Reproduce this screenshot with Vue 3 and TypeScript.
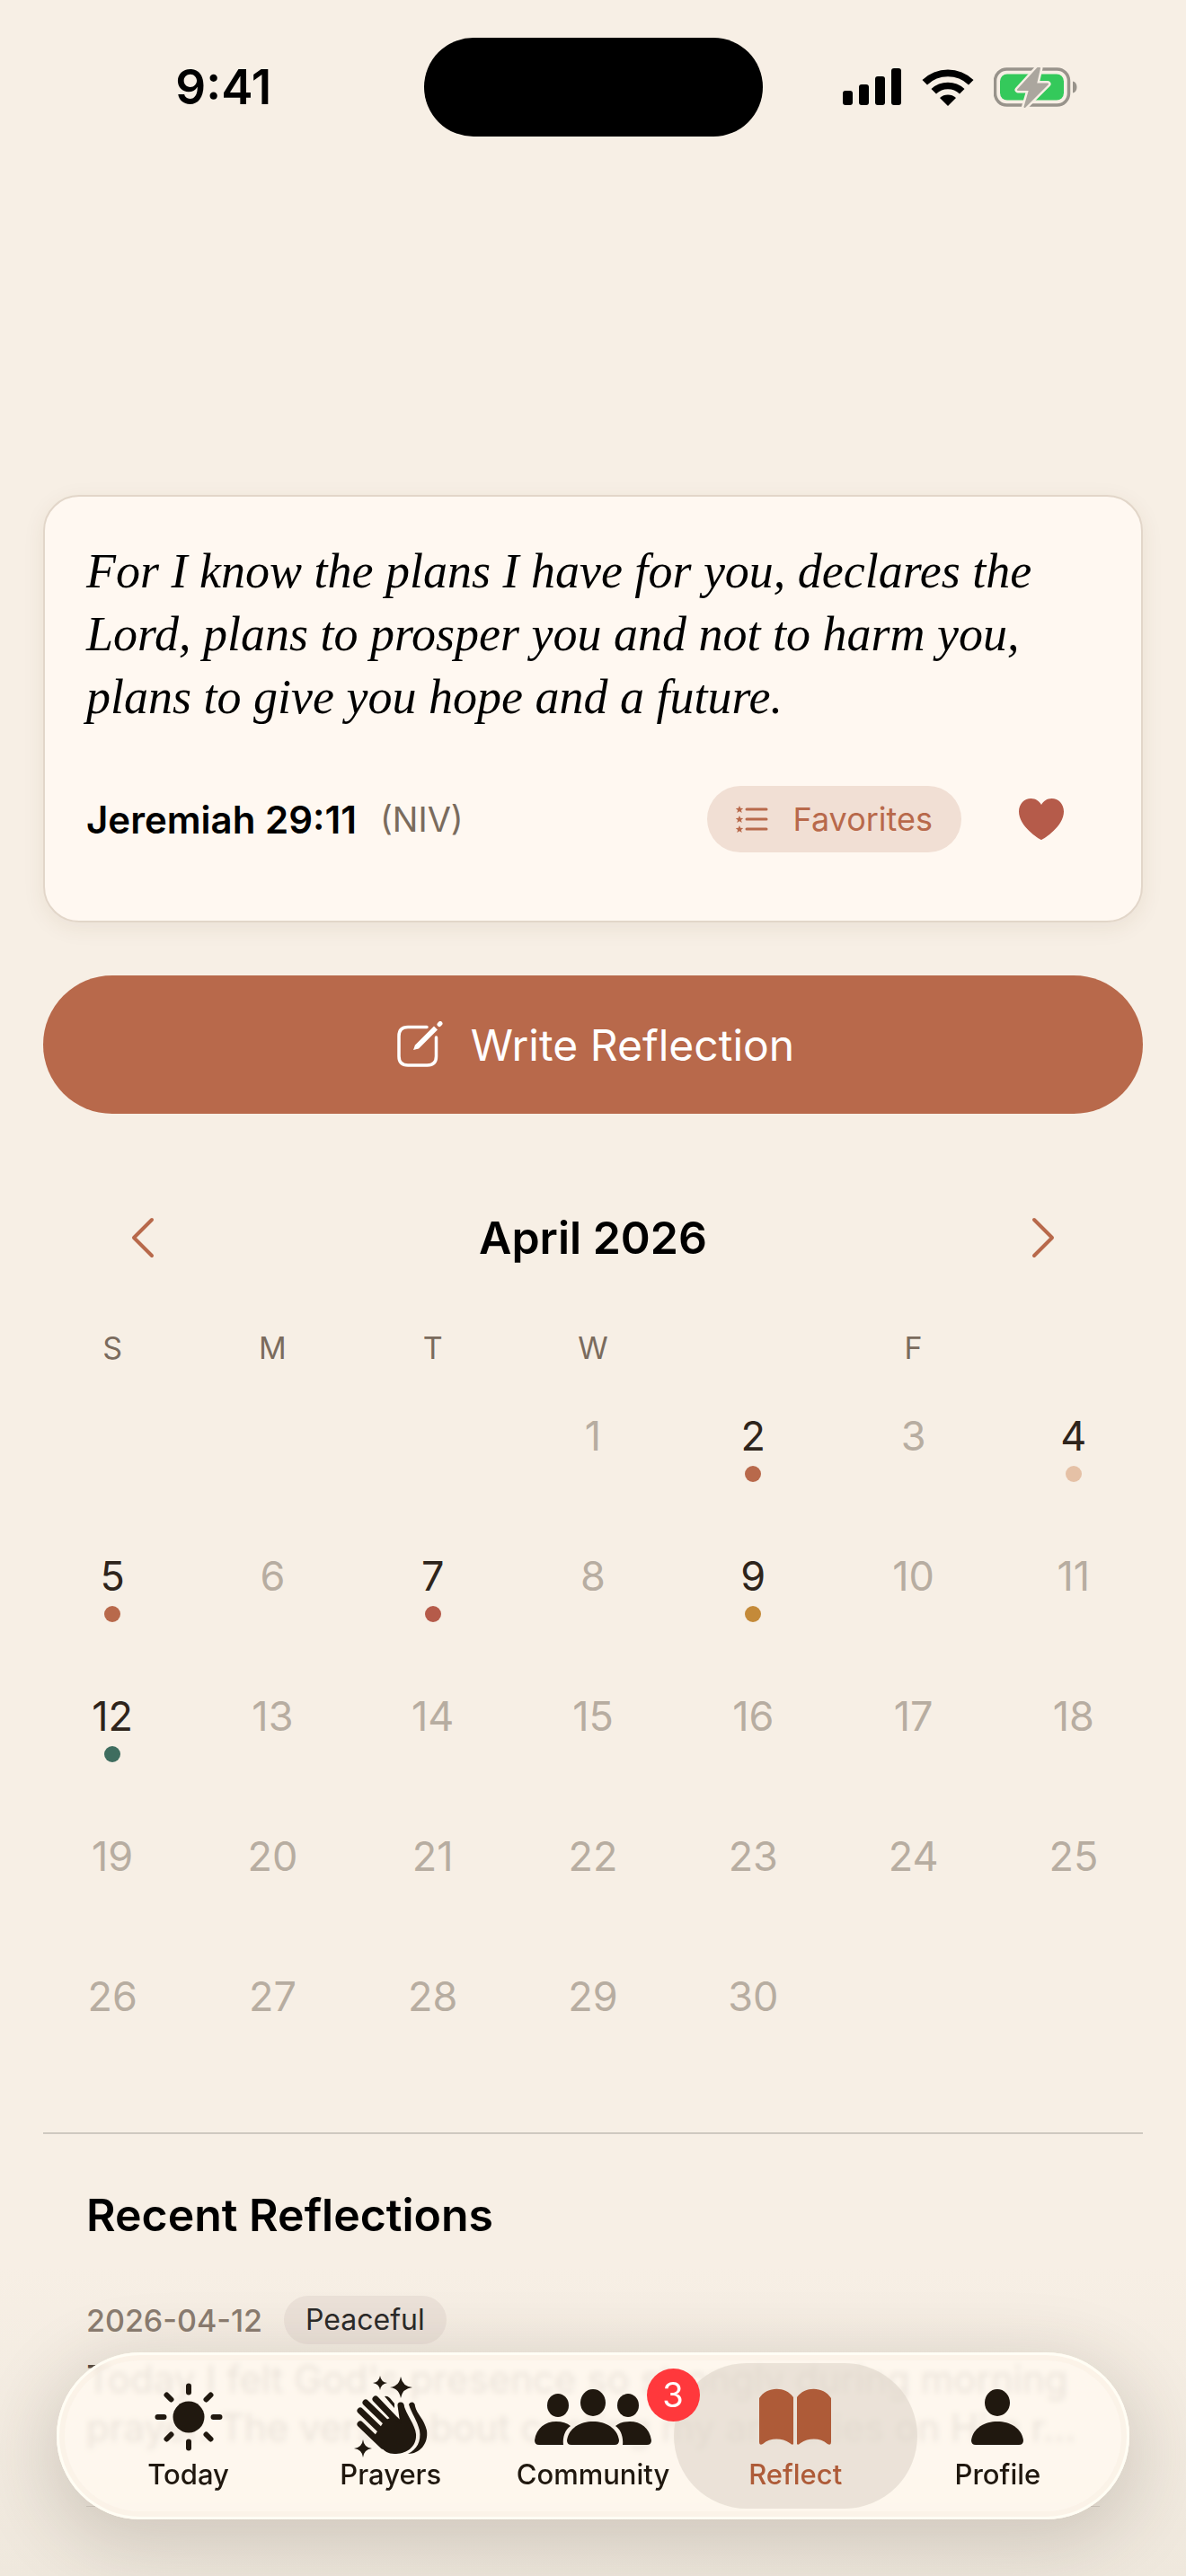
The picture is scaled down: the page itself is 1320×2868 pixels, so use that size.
<script setup lang="ts">
interface Day {
  n: number
  mood?: string
}

const weekdays: string[] = ['S', 'M', 'T', 'W', '', 'F', '']

const moods: Record<number, string> = {
  2: '#b8694b',
  4: '#e5c1a6',
  5: '#b8694b',
  7: '#b55b4a',
  9: '#c48a39',
  12: '#3f6d5f',
}

const firstWeekday = 3
const cells: (Day | null)[] = [
  ...Array.from({ length: firstWeekday }, () => null),
  ...Array.from({ length: 30 }, (_, i) => ({ n: i + 1, mood: moods[i + 1] })),
]
while (cells.length % 7) cells.push(null)

const weeks: (Day | null)[][] = []
for (let i = 0; i < cells.length; i += 7) weeks.push(cells.slice(i, i + 7))
</script>

<template>
  <div class="screen">
    <header class="status">
      <span class="time">9:41</span>
      <span class="island"></span>
      <span class="indicators">
        <svg width="66" height="42" viewBox="0 0 66 42" aria-hidden="true">
          <rect x="0" y="25" width="11" height="16" rx="3" />
          <rect x="18" y="18" width="11" height="23" rx="3" />
          <rect x="36" y="9" width="11" height="32" rx="3" />
          <rect x="54" y="0" width="11" height="41" rx="3" />
        </svg>
        <svg width="58" height="42" viewBox="0 0 58 42" aria-hidden="true">
          <path d="M0.5 13 A41 41 0 0 1 57.500 13 L52 18.500 A33 33 0 0 0 6 18.500 Z" />
          <path d="M10.500 23 A27 27 0 0 1 47.500 23 L42 28.500 A19 19 0 0 0 16 28.500 Z" />
          <path d="M20 33 A13.500 13.500 0 0 1 38 33 L29 42 Z" />
        </svg>
        <svg width="94" height="46" viewBox="0 0 94 46" aria-hidden="true">
          <rect x="1.500" y="3" width="82" height="40" rx="13" fill="none" stroke="#98938b" stroke-width="3.500" />
          <path d="M88 16.500 C94 17.500 94 28.500 88 29.500 Z" fill="#98938b" />
          <rect x="7" y="8.500" width="71" height="29" rx="8" fill="#34c95b" />
          <path
            d="M49 2 L27 26 H40 L34.500 45 L60 19.500 H47 L51 2 Z"
            fill="#aba69e" stroke="#f7efe5" stroke-width="7" stroke-linejoin="round"
          />
          <path
            d="M49 2 L27 26 H40 L34.500 45 L60 19.500 H47 L51 2 Z"
            fill="#aba69e" stroke="#aba69e" stroke-width="2" stroke-linejoin="round"
          />
        </svg>
      </span>
    </header>

    <main class="content">
      <article class="verse">
        <blockquote>For I know the plans I have for you, declares the Lord, plans to prosper you and not to harm you, plans to give you hope and a future.</blockquote>
        <footer class="verse-foot">
          <cite>Jeremiah 29:11</cite>
          <span class="version">(NIV)</span>
          <button class="favorites" type="button">
            <svg width="36" height="30" viewBox="0 0 36 30" aria-hidden="true">
              <g stroke="currentColor" stroke-width="3" stroke-linecap="round">
                <path d="M12 4H34M12 15H34M12 26H34" />
              </g>
              <g fill="currentColor">
                <path id="star" d="M4 0l1.200 2.800 3 .2-2.300 2 .8 3L4 6.300 1.300 8l.8-3L-.2 3l3-.2z" />
                <use href="#star" y="11" />
                <use href="#star" y="22" />
              </g>
            </svg>
            Favorites
          </button>
          <button class="heart" type="button" aria-label="Remove from favorites">
            <svg width="50" height="46" viewBox="0 0 50 46" aria-hidden="true">
              <path d="M25 46 C22 45 0 31 0 14.500 C0 6 6 0 13.500 0 C18.500 0 22.800 2.800 25 7 C27.200 2.800 31.500 0 36.500 0 C44 0 50 6 50 14.500 C50 31 28 45 25 46 Z" fill="#b55b4a" />
            </svg>
          </button>
        </footer>
      </article>

      <button class="write" type="button">
        <svg width="52" height="52" viewBox="0 0 52 52" fill="none" stroke="#fff" aria-hidden="true">
          <path d="M33 6.500 H12 Q2 6.500 2 16.500 V39 Q2 49 12 49 H33.500 Q43.500 49 43.500 39 V18" stroke-width="3.500" stroke-linecap="round" />
          <path d="M18 32 L20 26.500 L41 5.500 L45 9.500 L24 30.500 Z" fill="#fff" stroke="none" />
          <path d="M47 3.500 L48 2.500" stroke-width="5" stroke-linecap="round" />
        </svg>
        Write Reflection
      </button>

      <section class="calendar">
        <div class="month">
          <button type="button" aria-label="Previous month">
            <svg width="26" height="46" viewBox="0 0 26 46" aria-hidden="true"><path d="M23 3 L3 23 L23 43" /></svg>
          </button>
          <h2>April 2026</h2>
          <button type="button" aria-label="Next month">
            <svg width="26" height="46" viewBox="0 0 26 46" aria-hidden="true"><path d="M3 3 L23 23 L3 43" /></svg>
          </button>
        </div>
        <table>
          <thead>
            <tr>
              <th v-for="(d, i) in weekdays" :key="i" scope="col">{{ d }}</th>
            </tr>
          </thead>
          <tbody>
            <tr v-for="(week, w) in weeks" :key="w">
              <td v-for="(day, i) in week" :key="i">
                <div v-if="day" class="day" :class="{ marked: day.mood }">
                  {{ day.n }}
                  <span v-if="day.mood" class="dot" :style="{ background: day.mood }"></span>
                </div>
              </td>
            </tr>
          </tbody>
        </table>
      </section>

      <section class="recent">
        <h2>Recent Reflections</h2>
        <article class="entry">
          <div class="meta">
            <time datetime="2026-04-12">2026-04-12</time>
            <span class="tag">Peaceful</span>
          </div>
          <p>Today I felt God's presence so strongly during morning<br />prayer. The verse about casting my anxieties on Him r...</p>
        </article>
      </section>
    </main>

    <nav class="tabs" aria-label="Main">
      <a href="#today">
        <svg width="76" height="76" viewBox="-38 -38 76 76" aria-hidden="true">
          <circle r="17.500" />
          <g stroke="currentColor" stroke-width="6" stroke-linecap="round">
            <path d="M0-34.500V-27.500M0 34.500V27.500M-34.500 0H-27.500M34.500 0H27.500M-24.500-24.500L-19.500-19.500M24.500 24.500L19.500 19.500M-24.500 24.500L-19.500 19.500M24.500-24.500L19.500-19.500" />
          </g>
        </svg>
        Today
      </a>
      <a href="#prayers">
        <svg width="82" height="92" viewBox="0 0 82 92" aria-hidden="true">
          <path d="M29 0 Q30 7 37 8 Q30 9 29 16 Q28 9 21 8 Q28 7 29 0Z" />
          <path d="M52 1 Q54 12 65 13 Q54 14 52 25 Q50 14 40 13 Q50 12 52 1Z" />
          <path d="M10 71 Q11 80 20 81 Q11 82 10 91 Q9 82 0 81 Q9 80 10 71Z" />
          <g fill="none" stroke="currentColor" stroke-width="7" stroke-linecap="round">
            <path d="M7 54 L32 78M7 39 L36 67M13 30 L42 58M24 26 L50 53M52 33 L55 54" />
          </g>
          <path d="M34 50 L42 46 L53 54 L49 33 L55 31 C58 44 68 54 69 65 C70 79 59 87 45 87 C38 87 34 84 29 79 L22 68 Z" />
          <path d="M34 23 Q37 22 40 25 L45 31 V36 Z" />
          <path d="M61 32 C63 28 68 29 68 34 C70 43 78 48 81 61 C83 76 73 87 60 87 C70 82 75 73 73 61 C70 49 64 42 61 32Z" />
        </svg>
        Prayers
      </a>
      <a href="#community">
        <svg width="130" height="64" viewBox="0 0 130 64" aria-hidden="true">
          <ellipse cx="26" cy="19" rx="12" ry="13" />
          <ellipse cx="104" cy="19" rx="12" ry="13" />
          <ellipse cx="65" cy="16" rx="14" ry="15" />
          <path d="M5 63 Q0 63 0 58 C2 44 12 37 24 37 Q34 37 40 42 C34 46 31 54 32 63 Z" />
          <path d="M125 63 Q130 63 130 58 C128 44 118 37 106 37 Q96 37 90 42 C96 46 99 54 98 63 Z" />
          <path d="M41 63 Q36 63 36 58 C38 44 51 37 65 37 C79 37 92 44 94 58 Q94 63 89 63 Z" />
        </svg>
        Community
        <span class="badge">3</span>
      </a>
      <a href="#reflect" class="active" aria-current="page">
        <svg width="80" height="64" viewBox="0 0 80 64" aria-hidden="true">
          <path d="M0 11 C8-2 29-3 38 10 V62 Q37 64 34 61 C25 55 12 55 4 62 Q0 64 0 60 Z" />
          <path d="M42 10 C51-3 72-2 80 11 V60 Q80 64 76 62 C68 55 55 55 46 61 Q43 64 42 62 Z" />
        </svg>
        Reflect
      </a>
      <a href="#profile">
        <svg width="58" height="64" viewBox="0 0 58 64" aria-hidden="true">
          <ellipse cx="29" cy="16" rx="14" ry="15" />
          <path d="M5 63 Q0 63 0 58 C2 44 15 37 29 37 C43 37 56 44 58 58 Q58 63 53 63 Z" />
        </svg>
        Profile
      </a>
    </nav>
  </div>
</template>

<style>
body {
  margin: 0;
  background: #f7efe5;
}
</style>

<style scoped>
.screen {
  position: relative;
  height: 100vh;
  overflow: hidden;
  background: linear-gradient(#f7efe5 0, #f7efe5 88%, #efe8dd 100%);
  font-family: Inter, 'Liberation Sans', sans-serif;
  color: #000;
}

button {
  border: 0;
  padding: 0;
  background: none;
  font: inherit;
}

h2 {
  margin: 0;
  font-size: 50px;
  font-weight: 600;
  line-height: 60px;
}

.status {
  display: grid;
  grid-template-columns: 1fr 377px 1fr;
  align-items: center;
  height: 110px;
  padding-top: 42px;
}

.time {
  padding-left: 26px;
  text-align: center;
  font-size: 53px;
  font-weight: 600;
}

.island {
  height: 110px;
  border-radius: 55px;
  background: #000;
}

.indicators {
  display: flex;
  align-items: center;
  gap: 22px;
  padding-left: 89px;
}

.content {
  padding: 399px 48px 0;
}

.verse {
  box-sizing: border-box;
  height: 476px;
  padding: 48px 46px;
  border: 2px solid #e2d6c9;
  border-radius: 40px;
  background: #fff8f1;
  box-shadow: 0 6px 24px rgba(90, 60, 30, 0.08);
}

blockquote {
  margin: 0;
  font-family: 'Liberation Serif', serif;
  font-size: 54px;
  font-style: italic;
  line-height: 70px;
}

.verse-foot {
  display: flex;
  align-items: center;
  height: 74px;
  margin-top: 64px;
}

cite {
  font-size: 42px;
  font-style: normal;
  font-weight: 600;
}

.version {
  margin-left: 26px;
  color: #7a6b5d;
  font-size: 38px;
}

.favorites {
  display: flex;
  align-items: center;
  gap: 28px;
  height: 74px;
  margin-left: auto;
  padding: 0 32px;
  border-radius: 37px;
  background: #f1dfd4;
  color: #b8694b;
  font-size: 36px;
}

.heart {
  display: flex;
  margin: 0 40px 0 64px;
}

.write {
  display: flex;
  align-items: center;
  justify-content: center;
  gap: 30px;
  width: 100%;
  height: 154px;
  margin-top: 59px;
  padding-left: 6px;
  border-radius: 77px;
  background: #b8694b;
  color: #fff;
  font-size: 48px;
}

.calendar {
  margin: 108px -12px 0;
}

.month {
  display: flex;
  align-items: center;
  justify-content: space-between;
  height: 60px;
  padding: 0 110px;
}

.month button {
  display: flex;
}

.month path {
  fill: none;
  stroke: #b8694b;
  stroke-width: 4;
  stroke-linecap: round;
  stroke-linejoin: round;
}

table {
  width: 100%;
  margin-top: 66px;
  border-collapse: collapse;
  table-layout: fixed;
}

th {
  height: 52px;
  padding: 0 0 18px;
  color: #7a6b5d;
  font-size: 34px;
  font-weight: 400;
}

td {
  height: 156px;
  padding: 0;
  vertical-align: top;
}

.day {
  display: flex;
  flex-direction: column;
  align-items: center;
  gap: 6px;
  padding-top: 28px;
  color: #b7ada1;
  font-size: 45px;
  line-height: 54px;
}

.marked {
  color: #2e241b;
}

.dot {
  width: 18px;
  height: 18px;
  border-radius: 50%;
}

.recent {
  margin-top: 50px;
  padding: 60px 48px 0;
  border-top: 2px solid #cfc9c0;
}

.entry {
  padding: 60px 0;
  border-bottom: 1px solid #d8d1c7;
}

.meta {
  display: flex;
  align-items: center;
  gap: 24px;
}

time {
  color: #8a7c70;
  font-size: 34px;
  font-weight: 500;
}

.tag {
  padding: 0 24px;
  border-radius: 27px;
  background: #ebe1d8;
  color: #2b2a29;
  font-size: 32px;
  line-height: 54px;
}

.entry p {
  margin: 12px 0 0;
  color: #5a4e44;
  font-size: 42px;
  line-height: 54px;
  white-space: nowrap;
}

.tabs {
  position: fixed;
  right: 63px;
  bottom: 63px;
  left: 63px;
  display: flex;
  box-sizing: border-box;
  height: 186px;
  padding: 12px 34px;
  border-radius: 93px;
  background: rgba(255, 248, 239, 0.88);
  box-shadow: 0 20px 80px 10px rgba(60, 50, 40, 0.18), inset 0 0 0 3px #fffdf4, inset 0 0 0 9px rgba(245, 235, 224, 0.35);
  backdrop-filter: blur(3px);
}

.tabs a {
  position: relative;
  display: flex;
  flex: 1;
  flex-direction: column;
  align-items: center;
  justify-content: space-between;
  box-sizing: border-box;
  height: 162px;
  padding: 14px 0 20px;
  color: #20180f;
  font-size: 31px;
  font-weight: 500;
  line-height: 36px;
  text-decoration: none;
}

.tabs svg {
  height: 92px;
  overflow: visible;
  fill: currentColor;
}

.tabs .active {
  color: #ae5b38;
}

.active::before {
  content: '';
  position: absolute;
  inset: 0 -23px;
  z-index: -1;
  border-radius: 81px;
  background: rgba(222, 213, 201, 0.6);
}

.badge {
  position: absolute;
  top: 6px;
  right: -6px;
  width: 59px;
  height: 59px;
  border-radius: 50%;
  background: #ff383c;
  color: #fff;
  font-size: 38px;
  font-weight: 400;
  line-height: 59px;
  text-align: center;
}
</style>
